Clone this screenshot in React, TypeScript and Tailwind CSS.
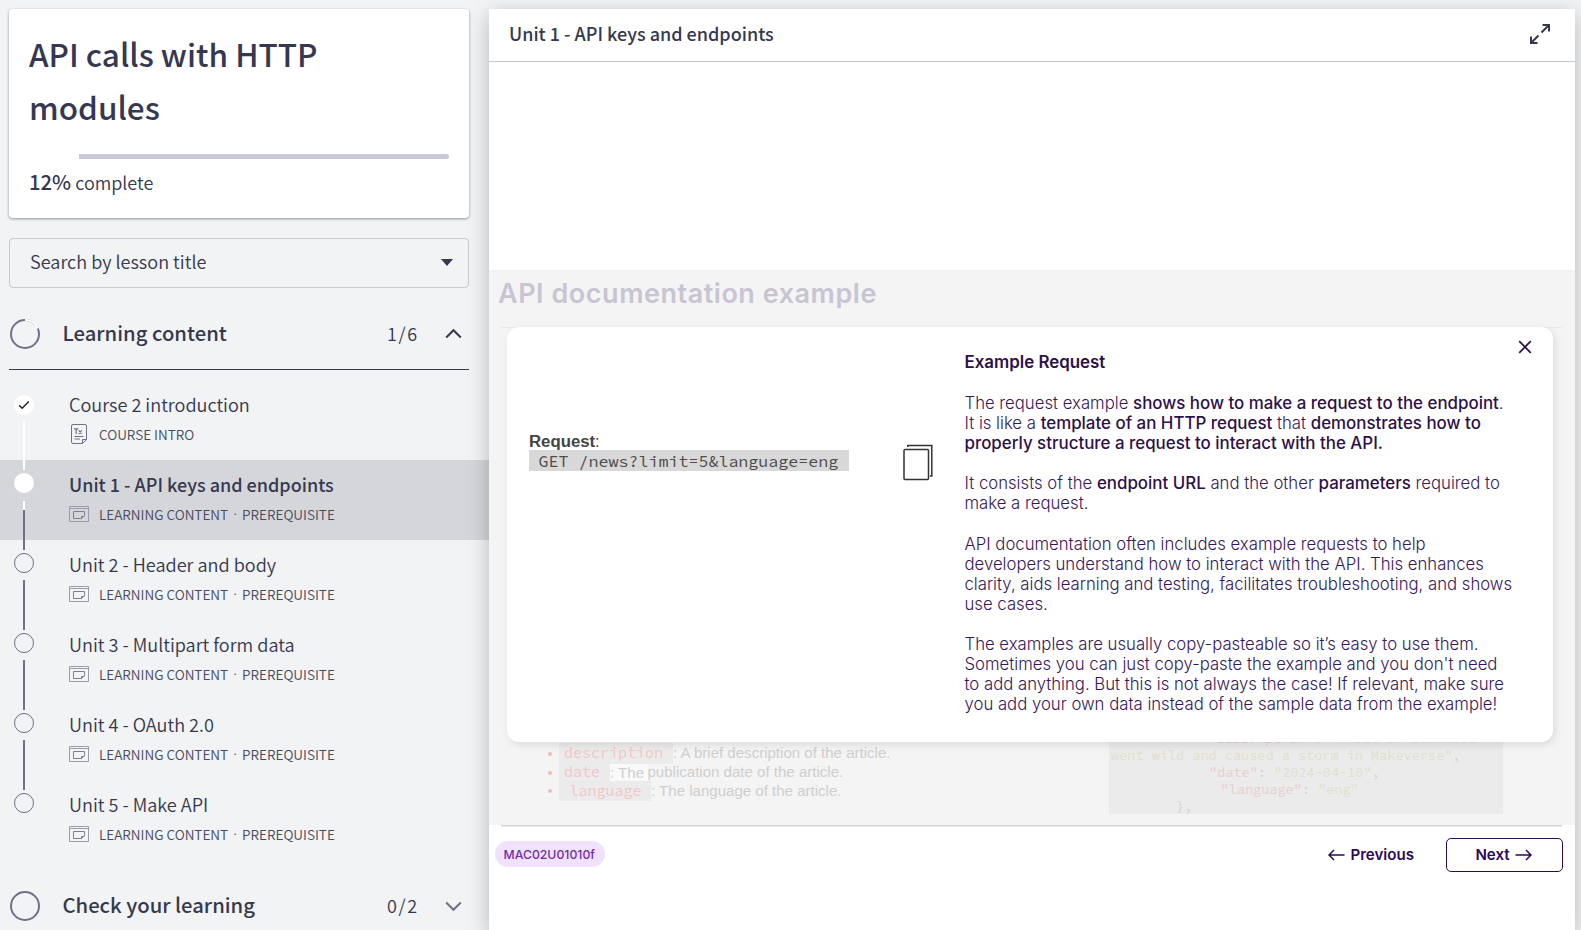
import React from "react";

const sans = "font-['Noto_Sans_CJK_SC',sans-serif]";
const inter = "font-[Inter,sans-serif]";
const mono = "font-['Source_Code_Pro','Noto_Sans_Mono','DejaVu_Sans_Mono',monospace]";
const arial = "font-['Liberation_Sans',sans-serif]";

type RailState = "done" | "current" | "open" | "last";

interface Lesson {
  title: string;
  state: RailState;
  intro?: boolean;
}

const lessons: Lesson[] = [
  { title: "Course 2 introduction", state: "done", intro: true },
  { title: "Unit 1 - API keys and endpoints", state: "current" },
  { title: "Unit 2 - Header and body", state: "open" },
  { title: "Unit 3 - Multipart form data", state: "open" },
  { title: "Unit 4 - OAuth 2.0", state: "open" },
  { title: "Unit 5 - Make API", state: "last" },
];

function Rail({ state }: { state: RailState }) {
  return (
    <div className="relative z-10 ml-[14px] flex h-[80px] w-5 shrink-0 flex-col items-center">
      {state === "done" ? (
        <div className="mt-[15px] flex size-5 shrink-0 items-center justify-center rounded-full bg-white">
          <svg width="12" height="10" viewBox="0 0 12 10" fill="none" stroke="#23252f" strokeWidth="1.5">
            <path d="M1.2 5.4 4.2 8.2 10.8 1.4" />
          </svg>
        </div>
      ) : state === "current" ? (
        <div className="mt-[13px] size-5 shrink-0 rounded-full bg-white" />
      ) : (
        <div className="mt-[13px] size-5 shrink-0 rounded-full border border-[#6e7187]" />
      )}
      {state === "done" && <div className="mt-[5px] h-[50px] w-[2px] shrink-0 bg-white" />}
      {state === "current" && (
        <>
          <div className="mt-[8px] h-[9px] w-[2px] shrink-0 bg-white" />
          <div className="h-10 w-[2px] shrink-0 bg-[#6e7187]" />
        </>
      )}
      {state === "open" && <div className="mt-[7px] h-[50px] w-[2px] shrink-0 bg-[#6e7187]" />}
    </div>
  );
}

function TextIcon() {
  return (
    <svg className="ml-[2px] mr-[11px] shrink-0" width="17" height="20" viewBox="0 0 17 20" fill="none" stroke="#6e7187" strokeWidth="1">
      <path d="M11.5 19.5H2A1.5 1.5 0 0 1 .5 18V2A1.5 1.5 0 0 1 2 .5H14A1.5 1.5 0 0 1 15.5 2V15.5L11.5 19.5V15.5H15.5" />
      <path d="M3 4.8H7.4M5.2 4.8V10M7.8 6.4 10.6 10M10.6 6.4 7.8 10" strokeWidth="1.2" />
      <path d="M3.5 12.5H12.5M3.5 15H9" />
    </svg>
  );
}

function ContentIcon() {
  return (
    <svg className="mr-[10px] shrink-0" width="20" height="16" viewBox="0 0 20 16" fill="none" stroke="#9a9cab" strokeWidth="1">
      <path d="M.5 .5H19.5V15.5H.5ZM.5 2.5H19.5" />
      <path d="M12.5 12.5H4.5V5.5H15.5V9.5L12.5 12.5V10.5H15.5" stroke="#7d8092" />
    </svg>
  );
}

function LessonRow({ lesson }: { lesson: Lesson }) {
  const current = lesson.state === "current";
  return (
    <li className={current ? "flex h-20 shrink-0 bg-[#d5d6da]" : "flex h-20 shrink-0"}>
      <Rail state={lesson.state} />
      <div className="ml-[35px] flex flex-col pt-3">
        <span className={current ? "whitespace-nowrap text-[18px] font-medium leading-6" : "whitespace-nowrap text-[18.1px] font-[350] leading-6"}>
          {lesson.title}
        </span>
        <div className="mt-2 flex h-5 items-center whitespace-nowrap text-[13.55px] font-[350] leading-5 text-[#474a60]">
          {lesson.intro ? <TextIcon /> : <ContentIcon />}
          {lesson.intro ? (
            <span>COURSE INTRO</span>
          ) : (
            <>
              <span>LEARNING CONTENT</span>
              <span className="flex w-[14px] justify-center font-[Inter,sans-serif]">·</span>
              <span>PREREQUISITE</span>
            </>
          )}
        </div>
      </div>
    </li>
  );
}

function Sidebar() {
  return (
    <aside className={`${sans} flex w-[489px] shrink-0 flex-col pt-[9px] text-[#35384f]`}>
      <section className="ml-[9px] flex h-[209px] w-[460px] shrink-0 flex-col rounded-[4px] bg-white pl-5 pr-5 pt-[18px] shadow-[0_1px_3px_rgba(0,0,0,0.4)]">
        <h1 className="text-[31.5px] font-medium leading-[52.8px]">
          API calls with HTTP
          <br />
          modules
        </h1>
        <div className="mt-[21.4px] flex h-[5px] justify-end overflow-hidden rounded-full">
          <div className="h-[5px] w-[370px] bg-[#c9cad7]" />
        </div>
        <p className="mt-[7px] text-[18px] font-[350] leading-[30px]">
          <span className="text-[20.3px] font-medium">12%</span> complete
        </p>
      </section>

      <button className="ml-[9px] mt-5 flex h-[50px] w-[460px] shrink-0 items-center justify-between rounded-[4px] border border-[#c7c9d6] pb-[3px] pl-5 pr-[15px] text-[18.1px] font-[350]">
        Search by lesson title
        <svg className="mt-[2px]" width="12" height="7" viewBox="0 0 12 7" fill="#35384f">
          <path d="M0 0H12L6 7Z" />
        </svg>
      </button>

      <header className="ml-[9px] mt-[10px] flex h-[72px] w-[460px] shrink-0 items-center border-b border-[#35384f]">
        <svg className="ml-px" width="30" height="30" viewBox="0 0 30 30" fill="none" strokeWidth="2">
          <circle cx="15" cy="15" r="14" stroke="#6e7187" />
          <path d="M15 1A14 14 0 0 1 27.9 9.5" stroke="#fff" strokeWidth="2.2" />
        </svg>
        <h2 className="ml-[22.5px] w-[324.5px] pb-[2px] text-[20.25px] font-medium leading-[30px]">Learning content</h2>
        <span className="w-[57.5px] text-[18px] font-[350] tracking-[1.7px]">1/6</span>
        <svg width="17" height="11" viewBox="0 0 17 11" fill="none" stroke="#35384f" strokeWidth="2">
          <path d="M1.2 9.5 8.5 2.2 15.8 9.5" />
        </svg>
      </header>

      <ul className="mt-[10px] flex shrink-0 flex-col">
        {lessons.map((l) => (
          <LessonRow key={l.title} lesson={l} />
        ))}
      </ul>

      <header className="ml-[9px] mt-[10px] flex h-[72px] w-[460px] shrink-0 items-center">
        <svg className="ml-px" width="30" height="30" viewBox="0 0 30 30" fill="none" strokeWidth="2">
          <circle cx="15" cy="15" r="14" stroke="#6e7187" />
        </svg>
        <h2 className="ml-[22.5px] w-[324.5px] pb-[2px] text-[20.25px] font-medium leading-[30px]">Check your learning</h2>
        <span className="w-[57.5px] pb-px text-[18px] font-[350] tracking-[1.7px]">0/2</span>
        <svg width="17" height="11" viewBox="0 0 17 11" fill="none" stroke="#6e7187" strokeWidth="2">
          <path d="M1.2 1.5 8.5 8.8 15.8 1.5" />
        </svg>
      </header>
    </aside>
  );
}

function Strong({ children }: { children: React.ReactNode }) {
  return <b className="text-[16.9px] font-medium text-[#2d1049]">{children}</b>;
}

function ExamplePopup() {
  return (
    <div className="absolute left-[17.5px] top-[57px] z-10 flex h-[415px] w-[1046.5px] rounded-[12px] bg-white shadow-[2px_3px_8px_rgba(0,0,0,0.1)]">
      <div className="flex w-[458px] shrink-0 items-start pl-[22.5px] pt-[103px]">
        <div className="w-[374px]">
          <p className={`${arial} h-5 pt-[1.5px] text-[16.75px] font-bold leading-5 text-[#444]`}>
            Request<span className="font-normal">:</span>
          </p>
          <p className={`${mono} flex h-[21px] w-[320px] items-center bg-[#d8d8d8] pl-[9.5px] pt-px text-[16.67px] text-[#4c4c4c]`}>
            GET /news?limit=5&amp;language=eng
          </p>
        </div>
        <svg className="mt-[14px]" width="30" height="37" viewBox="0 0 30 37" fill="none" stroke="#333" strokeWidth="1.5">
          <rect x="1" y="5.5" width="24.5" height="30" rx="1" />
          <path d="M4.8 3V1.5H28.8V32H26.8" />
        </svg>
      </div>
      <div className={`${inter} flex w-[560px] flex-col whitespace-nowrap pt-[25px] text-[16.73px] font-light leading-[20.1px] text-[#35185a]`}>
        <h3 className="mb-[21px] text-[16.9px] font-semibold leading-[20px] text-[#2d1049]">Example Request</h3>
        <p className="mb-[20.1px]">
          The request example <Strong>shows how to make a request to the endpoint</Strong>.
          <br />
          It is like a <Strong>template of an HTTP request</Strong> that <Strong>demonstrates how to</Strong>
          <br />
          <Strong>properly structure a request to interact with the API.</Strong>
        </p>
        <p className="mb-[20.1px]">
          It consists of the <Strong>endpoint URL</Strong> and the other <Strong>parameters</Strong> required to
          <br />
          make a request.
        </p>
        <p className="mb-[20.1px]">
          API documentation often includes example requests to help
          <br />
          developers understand how to interact with the API. This enhances
          <br />
          clarity, aids learning and testing, facilitates troubleshooting, and shows
          <br />
          use cases.
        </p>
        <p>
          The examples are usually copy-pasteable so it’s easy to use them.
          <br />
          Sometimes you can just copy-paste the example and you don't need
          <br />
          to add anything. But this is not always the case! If relevant, make sure
          <br />
          you add your own data instead of the sample data from the example!
        </p>
      </div>
      <svg className="-ml-[6.5px] mt-[13px]" width="14" height="14" viewBox="0 0 14 14" fill="none" stroke="#2d1049" strokeWidth="1.7">
        <path d="M1.2 1.2 12.8 12.8M12.8 1.2 1.2 12.8" />
      </svg>
    </div>
  );
}

function Bullet() {
  return <span className="mr-[7px] size-[4px] rounded-full bg-[#f3b9b9]" />;
}

function Slide() {
  return (
    <div className="relative flex h-[555px] flex-col bg-[#f4f4f4]">
      <h2 className={`${inter} ml-[9px] mt-[7px] h-[33px] whitespace-nowrap text-[27px] font-semibold leading-[34px] tracking-[0.53px] text-[#c9c4d2]`}>
        API documentation example
      </h2>
      <div className="ml-3 mt-[17px] h-px w-[1061px] bg-[#e9e8ea]" />
      <div className="mt-[399px] flex">
        <ul className={`${arial} ml-[59px] mt-[16px] flex w-[561px] flex-col whitespace-nowrap text-[15.06px] text-[#cfcfcf]`}>
          <li className="flex h-[21px] items-center">
            <Bullet />
            <code className={`${mono} flex h-[21px] w-[114px] items-center bg-[#ebebeb] pl-[5px] text-[15px] text-[#f3c6c6]`}>description</code>
            <span>: A brief description of the article.</span>
          </li>
          <li className="flex h-[17px] items-center">
            <Bullet />
            <code className={`${mono} flex h-[17px] w-[51px] items-center bg-[#ebebeb] pl-[5px] text-[15px] text-[#f3c6c6]`}>date</code>
            <span className="w-[37.5px] bg-[#f9f9f9] leading-[17px]">: The</span>
            <span>publication date of the article.</span>
          </li>
          <li className="flex h-5 items-center">
            <Bullet />
            <code className={`${mono} flex h-5 w-[92px] items-center bg-[#ebebeb] pl-[10.5px] text-[15px] text-[#f3c6c6]`}>language</code>
            <span>: The language of the article.</span>
          </li>
        </ul>
        <pre className={`${mono} h-[86.5px] w-[393.5px] bg-[#ebebeb] pl-[2px] pt-[2.5px] text-[13.55px] leading-[17.2px] text-[#d3d3d3]`}>
          <div className="pl-[97px] text-[#e6d0d0]">
            "description"<span className="text-[#d3d3d3]">: </span>
            <span className="text-[#dfe0cc]">"A set of dominoes</span>
          </div>
          <div>
            <span className="text-[#dfe0cc]">went wild and caused a storm in Makeverse"</span>,
          </div>
          <div className="pl-[98px]">
            <span className="text-[#e6d0d0]">"date"</span>: <span className="text-[#dfe0cc]">"2024-04-10"</span>,
          </div>
          <div className="pl-[109.5px]">
            <span className="text-[#e6d0d0]">"language"</span>: <span className="text-[#dfe0cc]">"eng"</span>
          </div>
          <div className="pl-[65px]">{"},"}</div>
        </pre>
      </div>
      <ExamplePopup />
    </div>
  );
}

function SlideFooter() {
  return (
    <div className={`${inter} flex flex-col`}>
      <div className="ml-3 flex h-[2px] w-[1061px] flex-col bg-[#ebe7eb]">
        <div className="h-px bg-[#d8d3d8]" />
      </div>
      <div className="flex items-center pt-[11px] text-[15.1px] font-semibold text-[#2b0a57]">
        <span className="-mt-[3px] ml-[6px] flex h-[26px] w-[110px] items-center rounded-full bg-[#f0e2fc] pl-[8.5px] pt-[3px] text-[12.25px] font-medium text-[#6f2da0]">
          MAC02U01010f
        </span>
        <button className="ml-auto flex items-center">
          <svg className="mr-[5px]" width="17" height="12" viewBox="0 0 17 12" fill="none" stroke="#2b0a57" strokeWidth="1.5">
            <path d="M16.5 6H1M6 1 1 6 6 11" />
          </svg>
          <span className="pt-px">Previous</span>
        </button>
        <button className="ml-8 mr-[12px] flex h-[34px] w-[117px] items-center justify-center rounded-[5px] border border-[#2b0a57] pr-[2px]">
          <span className="pt-px">Next</span>
          <svg className="ml-[5px]" width="17" height="12" viewBox="0 0 17 12" fill="none" stroke="#2b0a57" strokeWidth="1.5">
            <path d="M.5 6H16M11 1 16 6 11 11" />
          </svg>
        </button>
      </div>
    </div>
  );
}

export default function App() {
  return (
    <div className="flex h-[930px] w-[1581px] overflow-hidden bg-[#f1f3f5]">
      <Sidebar />
      <main className="relative z-20 mt-[9px] flex w-[1086px] shrink-0 flex-col bg-white shadow-[0_6px_20px_rgba(0,0,0,0.25)]">
        <header className={`${sans} flex h-[53px] items-center justify-between border-b border-[#c9cad7] pl-5 pr-[24px] text-[18px] font-medium text-[#35384f]`}>
          <span className="pb-[3px]">Unit 1 - API keys and endpoints</span>
          <svg className="-mt-[2px]" width="22" height="22" viewBox="0 0 22 22" fill="none" stroke="#35384f" strokeWidth="2">
            <path d="M12.5 9.5 20 2M13.5 2H20V8.5M9.5 12.5 2 20M2 13.5V20H8.5" />
          </svg>
        </header>
        <div className="h-[208px]" />
        <Slide />
        <SlideFooter />
      </main>
    </div>
  );
}
